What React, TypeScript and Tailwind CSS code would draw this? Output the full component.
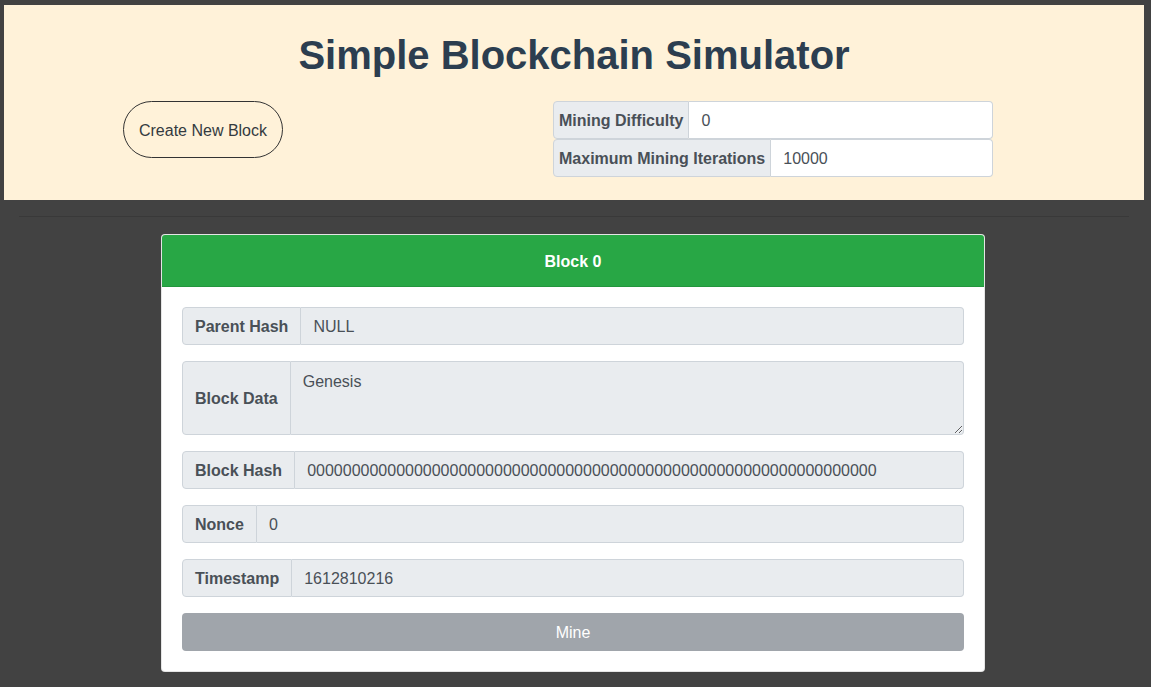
import React from 'react';

const font = { fontFamily: '"Liberation Sans", Arial, sans-serif' };

function Field({ label, value }: { label: string; value: string }) {
  return (
    <div className="flex h-[38px] text-[16px] text-[#495057]">
      <div className="flex items-center px-3 pt-[2px] bg-[#e9ecef] border border-[#ced4da] rounded-l-[4px] font-bold whitespace-nowrap">
        {label}
      </div>
      <div className="flex-1 flex items-center px-3 pt-[2px] bg-[#e9ecef] border border-l-0 border-[#ced4da] rounded-r-[4px] whitespace-nowrap overflow-hidden">
        {value}
      </div>
    </div>
  );
}

function HeaderField({ label, value }: { label: string; value: string }) {
  return (
    <div className="flex h-[38px] text-[16px] text-[#495057]">
      <div className="flex items-center px-[5px] pt-[2px] bg-[#e9ecef] border border-[#ced4da] rounded-l-[4px] font-bold whitespace-nowrap">
        {label}
      </div>
      <div className="flex-1 flex items-center px-3 pt-[2px] bg-white border border-l-0 border-[#ced4da] rounded-r-[4px]">
        {value}
      </div>
    </div>
  );
}

export default function App() {
  return (
    <div className="min-h-[687px] bg-[#424242] pt-[5px] pb-4" style={font}>
      <header className="ml-[4px] w-[1140px] bg-[#fff2d9] pt-[26px] pb-[23px]">
        <h1 className="text-center text-[40px] leading-[48px] font-bold text-[#2c3e50]">
          Simple Blockchain Simulator
        </h1>
        <div className="flex items-start mt-[22px]">
          <button className="ml-[119px] w-[160px] h-[57px] pt-[2px] rounded-full border border-[#333] text-[16px] text-[#343a40]">
            Create New Block
          </button>
          <div className="ml-auto mr-[151px] w-[440px] flex flex-col">
            <HeaderField label="Mining Difficulty" value="0" />
            <HeaderField label="Maximum Mining Iterations" value="10000" />
          </div>
        </div>
      </header>

      <hr className="ml-[19px] w-[1110px] mt-4 border-0 border-t border-[#393939]" />

      <div className="ml-[161px] mt-[17px] w-[824px] bg-white border border-black/10 rounded-[4px] overflow-hidden">
        <div className="h-[52px] pt-[2px] bg-[#28a745] flex items-center justify-center text-white font-bold text-[16px] border-b border-black/10">
          Block 0
        </div>
        <div className="p-5 flex flex-col gap-4">
          <Field label="Parent Hash" value="NULL" />
          <div className="flex h-[74px] text-[16px] text-[#495057]">
            <div className="flex items-center px-3 pt-[2px] bg-[#e9ecef] border border-[#ced4da] rounded-l-[4px] font-bold whitespace-nowrap">
              Block Data
            </div>
            <textarea
              readOnly
              defaultValue="Genesis"
              className="flex-1 h-[74px] min-h-[38px] px-3 pt-[8px] pb-[6px] leading-6 bg-[#e9ecef] border border-l-0 border-[#ced4da] rounded-r-[4px] text-[#495057] outline-none"
              style={font}
            />
          </div>
          <Field label="Block Hash" value={'0'.repeat(64)} />
          <Field label="Nonce" value="0" />
          <Field label="Timestamp" value="1612810216" />
          <button className="h-[38px] pt-[2px] rounded-[4px] bg-[#a0a5ab] text-white text-[16px]">Mine</button>
        </div>
      </div>
    </div>
  );
}
